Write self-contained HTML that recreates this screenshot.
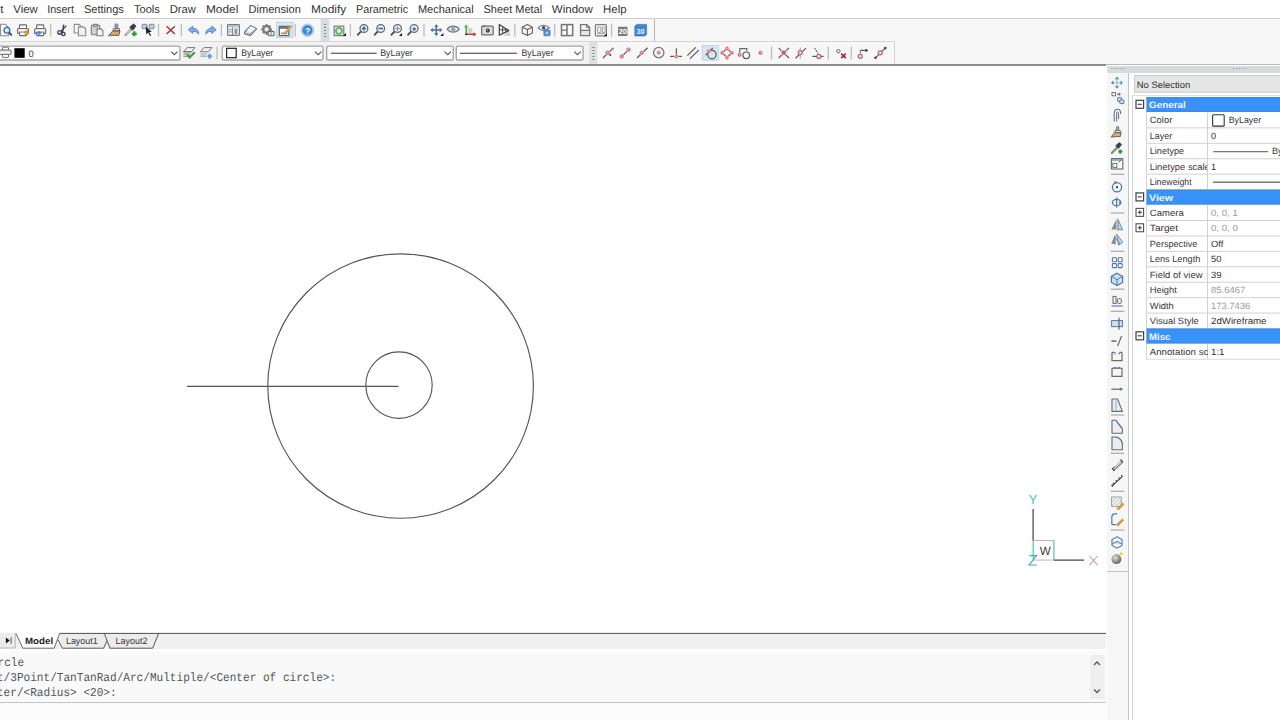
<!DOCTYPE html>
<html><head><meta charset="utf-8"><style>html,body{margin:0;padding:0;overflow:hidden;background:#fff}svg{display:block}</style></head><body><svg width="1280" height="720" viewBox="0 0 1280 720" text-rendering="geometricPrecision"><rect x="0" y="0" width="1280" height="720" fill="#ffffff" />
<rect x="0" y="0" width="1280" height="18" fill="#ffffff" />
<rect x="0" y="18" width="1280" height="1" fill="#cdcdcd" />
<rect x="0" y="19" width="1280" height="45" fill="#f7f7f7" />
<rect x="0" y="19" width="654" height="22" fill="#f7f7f7" />
<rect x="654" y="19" width="1" height="22" fill="#b4b4b4" />
<rect x="0" y="41" width="894" height="1" fill="#d5d5d5" />
<rect x="0" y="42" width="589" height="22" fill="#f2f2f2" />
<rect x="589" y="42" width="8" height="22" fill="#dde1e4" />
<rect x="597" y="42" width="297" height="22" fill="#f7f7f7" />
<rect x="894" y="41" width="1" height="23" fill="#d2d2d2" />
<rect x="0" y="64" width="1106" height="2" fill="#8e8e8e" />
<rect x="1106" y="64" width="174" height="1" fill="#b9b9b9" />
<text x="-16.1" y="13.2" font-family="Liberation Sans" font-size="11.3" font-weight="normal" fill="#333333" textLength="19.6" lengthAdjust="spacingAndGlyphs" >Edit</text>
<text x="13.25" y="13.2" font-family="Liberation Sans" font-size="11.3" font-weight="normal" fill="#333333" textLength="24.5" lengthAdjust="spacingAndGlyphs" >View</text>
<text x="47.2" y="13.2" font-family="Liberation Sans" font-size="11.3" font-weight="normal" fill="#333333" textLength="26.7" lengthAdjust="spacingAndGlyphs" >Insert</text>
<text x="83.9" y="13.2" font-family="Liberation Sans" font-size="11.3" font-weight="normal" fill="#333333" textLength="40.0" lengthAdjust="spacingAndGlyphs" >Settings</text>
<text x="133.9" y="13.2" font-family="Liberation Sans" font-size="11.3" font-weight="normal" fill="#333333" textLength="26.0" lengthAdjust="spacingAndGlyphs" >Tools</text>
<text x="169.8" y="13.2" font-family="Liberation Sans" font-size="11.3" font-weight="normal" fill="#333333" textLength="26.0" lengthAdjust="spacingAndGlyphs" >Draw</text>
<text x="206.0" y="13.2" font-family="Liberation Sans" font-size="11.3" font-weight="normal" fill="#333333" textLength="32.3" lengthAdjust="spacingAndGlyphs" >Model</text>
<text x="248.6" y="13.2" font-family="Liberation Sans" font-size="11.3" font-weight="normal" fill="#333333" textLength="52.2" lengthAdjust="spacingAndGlyphs" >Dimension</text>
<text x="311.1" y="13.2" font-family="Liberation Sans" font-size="11.3" font-weight="normal" fill="#333333" textLength="35.1" lengthAdjust="spacingAndGlyphs" >Modify</text>
<text x="356.1" y="13.2" font-family="Liberation Sans" font-size="11.3" font-weight="normal" fill="#333333" textLength="52.0" lengthAdjust="spacingAndGlyphs" >Parametric</text>
<text x="417.9" y="13.2" font-family="Liberation Sans" font-size="11.3" font-weight="normal" fill="#333333" textLength="55.8" lengthAdjust="spacingAndGlyphs" >Mechanical</text>
<text x="483.5" y="13.2" font-family="Liberation Sans" font-size="11.3" font-weight="normal" fill="#333333" textLength="58.6" lengthAdjust="spacingAndGlyphs" >Sheet Metal</text>
<text x="551.8" y="13.2" font-family="Liberation Sans" font-size="11.3" font-weight="normal" fill="#333333" textLength="41.0" lengthAdjust="spacingAndGlyphs" >Window</text>
<text x="603.1" y="13.2" font-family="Liberation Sans" font-size="11.3" font-weight="normal" fill="#333333" textLength="23.4" lengthAdjust="spacingAndGlyphs" >Help</text>
<rect x="0" y="66" width="1106" height="567" fill="#ffffff" />
<g fill="none" stroke="#555555" stroke-width="1.15"><ellipse cx="400.6" cy="386" rx="132.8" ry="132.2"/><circle cx="399" cy="385.1" r="33.2"/><line x1="187" y1="386.3" x2="398.5" y2="386.3"/></g>
<rect x="0" y="633" width="1106" height="1" fill="#6e6e6e" />
<rect x="0" y="634" width="1106" height="15" fill="#efefef" />
<rect x="0" y="649" width="1106" height="53" fill="#f9f9f9" />
<rect x="0" y="702" width="1106" height="1" fill="#c4c4c4" />
<rect x="0" y="703" width="1106" height="17" fill="#fafafa" />
<rect x="1106" y="65" width="174" height="655" fill="#ffffff" />
<rect x="1107" y="66" width="173" height="7" fill="#d6dbde" />
<rect x="1107" y="73" width="21" height="498" fill="#f6f6f6" />
<rect x="1107" y="571" width="21" height="149" fill="#f6f6f6" />
<rect x="1107" y="571" width="21" height="1" fill="#c0c0c0" />
<rect x="1128" y="73" width="1" height="647" fill="#c3c3c3" />
<rect x="1132" y="95" width="1" height="625" fill="#d3d3d3" />
<path d="M0.6 24.3 H5.3 L8.3 27.3 V35.8 H0.6Z" fill="#fff" stroke="#8c8c8c" stroke-width="1.1"/><line x1="8.8" y1="32.2" x2="11.2" y2="34.8" stroke="#2f3a46" stroke-width="1.8" stroke-linecap="round"/><circle cx="6.9" cy="30.3" r="2.9" fill="#d4ecfb" stroke="#3a6aa3" stroke-width="1.3"/>
<g stroke="#6a6a6a" stroke-width="1.1" fill="#fff"><rect x="19.5" y="24.9" width="7" height="4" rx="0.5"/><rect x="17.5" y="28.5" width="11" height="5.2" rx="1.2" fill="#e9e9e9"/><rect x="19.5" y="32" width="7" height="3.6" rx="0.5"/><line x1="19.5" y1="30.8" x2="26.5" y2="30.8" stroke="#fff" stroke-width="1"/></g><circle cx="26.6" cy="32.6" r="2.1" fill="#e59a2f" stroke="#c57a1a" stroke-width="0.5"/>
<g stroke="#6a6a6a" stroke-width="1.1" fill="#fff"><rect x="36.7" y="24.9" width="7" height="4" rx="0.5"/><rect x="34.7" y="28.5" width="11" height="5.2" rx="1.2" fill="#e9e9e9"/><rect x="36.7" y="32" width="7" height="3.6" rx="0.5"/><line x1="36.7" y1="30.8" x2="43.7" y2="30.8" stroke="#fff" stroke-width="1"/></g><path d="M34 32.3 H38.5 V30.6 L41.8 33 L38.5 35.4 V33.7 H34Z" fill="#3f86d6"/>
<line x1="50.7" y1="23.8" x2="50.7" y2="36.6" stroke="#bdbdbd" stroke-width="1.3"/>
<g stroke="#3c4651" stroke-width="1.4" fill="none"><circle cx="59.6" cy="32.4" r="1.8"/><circle cx="63.4" cy="34" r="1.6"/><line x1="61" y1="31.4" x2="66.3" y2="25.6"/><line x1="62.6" y1="32.4" x2="63.6" y2="24.6"/></g>
<g stroke="#8a8a8a" stroke-width="1.1" fill="#f7f7f7"><path d="M74.2 24.4 H79 L80.6 26 V33 H74.2Z"/><path d="M78.4 26.9 H83.6 L85.7 29 V35.7 H78.4Z" fill="#f0f0f0"/></g>
<g stroke="#7d7d7d" stroke-width="1.1"><rect x="91.3" y="25.3" width="8.4" height="9.4" rx="0.8" fill="#cdd2d8"/><rect x="93.4" y="24.4" width="4.2" height="2" rx="0.6" fill="#e8e8e8"/><path d="M97 28.9 H101 L102.9 30.8 V35.7 H97Z" fill="#f4f4f4"/></g>
<rect x="115" y="23.8" width="2.8" height="5.4" rx="1.2" fill="#9aa0a6" stroke="#6b6b6b" stroke-width="0.8"/><rect x="113.2" y="28.8" width="6.4" height="2" fill="#e6e6e6" stroke="#555" stroke-width="0.8"/><path d="M112.8 31 H120 L118.8 35.3 H108.8Z" fill="#d5ad6c" stroke="#5a4a30" stroke-width="0.9"/><line x1="107.8" y1="35.8" x2="112" y2="35.8" stroke="#5b8fd0" stroke-width="0.9"/>
<path d="M125.6 35 L131.2 29.4" stroke="#8a8a8a" stroke-width="2.4" stroke-linecap="round"/><path d="M125.8 34.8 L131 29.6" stroke="#fff" stroke-width="1" /><path d="M130 27.2 L133.6 24.2 L135.6 26.2 L132.8 29.8Z" fill="#3b3f45" stroke="#3b3f45" stroke-width="1.2" stroke-linejoin="round"/><path d="M134.3 31.3 V36.3 M131.8 33.8 H136.8" stroke="#2e9a3a" stroke-width="2.2"/>
<rect x="142.2" y="24.3" width="4.8" height="4.4" rx="0.6" fill="#bcd0e6" stroke="#6e7f92" stroke-width="0.9"/><rect x="149.2" y="24.3" width="4.8" height="4.4" rx="0.6" fill="#bcd0e6" stroke="#6e7f92" stroke-width="0.9"/><path d="M145.8 26.6 L146.2 34.6 L148 32.6 L150.2 35.9 L151.2 35.2 L149.2 32.2 L151.8 31.8Z" fill="#222" />
<line x1="158.5" y1="23.8" x2="158.5" y2="36.6" stroke="#bdbdbd" stroke-width="1.3"/>
<path d="M166.6 26.2 L174.9 34 M174.9 26.2 L166.6 34" stroke="#a8353a" stroke-width="1.55"/>
<line x1="181.4" y1="23.8" x2="181.4" y2="36.6" stroke="#bdbdbd" stroke-width="1.3"/>
<path d="M188.3 29.7 L192.8 26.2 V28.3 C196.3 28.3 198.8 30.6 198.6 34.2 C197.4 32.2 195.6 31.3 192.8 31.5 V33.4Z" fill="#7eb0ea" stroke="#4d7fc0" stroke-width="0.9" stroke-linejoin="round"/>
<path d="M216.2 29.7 L211.7 26.2 V28.3 C208.2 28.3 205.7 30.6 205.9 34.2 C207.1 32.2 208.9 31.3 211.7 31.5 V33.4Z" fill="#7eb0ea" stroke="#4d7fc0" stroke-width="0.9" stroke-linejoin="round"/>
<line x1="221.4" y1="23.8" x2="221.4" y2="36.6" stroke="#bdbdbd" stroke-width="1.3"/>
<rect x="227.6" y="24.6" width="11.8" height="10.8" rx="0.8" fill="#f1f1f1" stroke="#737a80" stroke-width="1.2"/><rect x="228.2" y="25.2" width="10.6" height="2" fill="#a9c3de"/><line x1="232.4" y1="27.4" x2="232.4" y2="35" stroke="#737a80" stroke-width="1"/><rect x="234.3" y="28.6" width="3" height="5.4" fill="#9a9a9a"/><rect x="228.9" y="29" width="2.4" height="1.2" fill="#9a9a9a"/><rect x="228.9" y="31.3" width="2.4" height="1.2" fill="#9a9a9a"/>
<path d="M244.5 32.2 L250.6 25.6 L256.6 28.8 L250.6 35.4 L244.5 33.6Z" fill="#d8d8d8" stroke="#6f6f6f" stroke-width="1.1" stroke-linejoin="round"/><path d="M246.8 30.6 L251 26.3 L255.2 28.6 L250.8 33Z" fill="#f6f9fd"/><path d="M249.6 34.3 L255.8 29.2" stroke="#8fb0d8" stroke-width="1.2"/>
<g fill="#8a8a8a" stroke="#5e5e5e" stroke-width="0.6"><circle cx="266.6" cy="29.4" r="4.1"/></g><g fill="#7a7a7a"><rect x="265.7" y="24" width="1.8" height="10.8"/><rect x="261.2" y="28.5" width="10.8" height="1.8"/><rect x="265.7" y="24" width="1.8" height="10.8" transform="rotate(45 266.6 29.4)"/><rect x="261.2" y="28.5" width="10.8" height="1.8" transform="rotate(45 266.6 29.4)"/></g><circle cx="266.6" cy="29.4" r="2.6" fill="#f0f0f0" stroke="#6a6a6a" stroke-width="0.8"/><rect x="268.2" y="31.4" width="5.8" height="4.4" rx="0.6" fill="#ececec" stroke="#6a6a6a" stroke-width="1.1"/><line x1="271.1" y1="31.6" x2="271.1" y2="35.6" stroke="#6a6a6a" stroke-width="0.8"/>
<rect x="276.5" y="22.3" width="16.4" height="15.2" fill="#d9e6f3" stroke="#bcd3ea" stroke-width="1"/><rect x="279.3" y="26.4" width="9.6" height="9.2" fill="#fafafa" stroke="#5f6770" stroke-width="1.3"/><rect x="279.6" y="26.6" width="9" height="2.2" fill="#6c747c"/><line x1="281" y1="33.2" x2="287" y2="33.2" stroke="#5f6770" stroke-width="1"/><path d="M284.6 32.6 L290.2 25.4 L291.8 26.6 L286.2 33.6 L284.2 34.2Z" fill="#e8b060" stroke="#b07838" stroke-width="0.7"/>
<line x1="295.2" y1="23.8" x2="295.2" y2="36.6" stroke="#bdbdbd" stroke-width="1.3"/>
<circle cx="307.5" cy="30.2" r="6.3" fill="#b2d4f3" stroke="#8fb8e0" stroke-width="0.6"/><circle cx="307.5" cy="30.2" r="5" fill="#3c86d6"/><text x="307.5" y="33.6" font-family="Liberation Sans" font-weight="bold" font-size="8.6" fill="#fff" text-anchor="middle">?</text>
<rect x="320.6" y="19" width="8.8" height="22" fill="#d7dcdf"/><rect x="324" y="24" width="2.2" height="1" fill="#7f858a"/><rect x="324" y="27" width="2.2" height="1" fill="#7f858a"/><rect x="324" y="30" width="2.2" height="1" fill="#7f858a"/><rect x="324" y="33" width="2.2" height="1" fill="#7f858a"/><rect x="324" y="36" width="2.2" height="1" fill="#7f858a"/>
<rect x="334.2" y="26.2" width="9.6" height="9.4" fill="#f7f7f7" stroke="#7a7a7a" stroke-width="1.2"/><circle cx="339" cy="30.9" r="2.9" fill="none" stroke="#5cba5c" stroke-width="2"/><path d="M336.8 29.6 L338.4 31 M341.2 32.2 L339.6 30.8" stroke="#fff" stroke-width="0.8"/><path d="M346 36 L346 33 L343 36Z" fill="#111"/>
<line x1="350.4" y1="23.8" x2="350.4" y2="36.6" stroke="#bdbdbd" stroke-width="1.3"/>
<line x1="361.59999999999997" y1="30.9" x2="357.9" y2="34.7" stroke="#4d4d4d" stroke-width="1.9" stroke-linecap="round"/><circle cx="363.9" cy="28.5" r="3.9" fill="#e3eef9" stroke="#6a6a6a" stroke-width="1.3"/><path d="M361.8 28.5 H366 M363.9 26.4 V30.6" stroke="#3868a8" stroke-width="1.6"/>
<line x1="378.4" y1="30.9" x2="374.7" y2="34.7" stroke="#4d4d4d" stroke-width="1.9" stroke-linecap="round"/><circle cx="380.7" cy="28.5" r="3.9" fill="#e3eef9" stroke="#6a6a6a" stroke-width="1.3"/><path d="M378.4 28.5 H383" stroke="#3868a8" stroke-width="1.6"/>
<line x1="395.2" y1="30.9" x2="391.5" y2="34.7" stroke="#4d4d4d" stroke-width="1.9" stroke-linecap="round"/><circle cx="397.5" cy="28.5" r="3.9" fill="#e3eef9" stroke="#6a6a6a" stroke-width="1.3"/><path d="M395.2 28.5 H399.8 M397.5 26.2 V30.8" stroke="#6a8cb0" stroke-width="0.9"/><path d="M402 36 L402 33 L399 36Z" fill="#111"/>
<line x1="411.8" y1="30.9" x2="408.1" y2="34.7" stroke="#4d4d4d" stroke-width="1.9" stroke-linecap="round"/><circle cx="414.1" cy="28.5" r="3.9" fill="#e3eef9" stroke="#6a6a6a" stroke-width="1.3"/><path d="M412.2 29 L414.5 26.6 V28.2 H416 V29.8 H414.5 V31.4Z" fill="#3c6cb0"/>
<line x1="424" y1="23.8" x2="424" y2="36.6" stroke="#bdbdbd" stroke-width="1.3"/>
<g stroke="#4a6f98" stroke-width="1.5" fill="#4a6f98"><line x1="431.5" y1="30" x2="441.2" y2="30"/><line x1="436.3" y1="25.3" x2="436.3" y2="34.8"/></g><g fill="#4a6f98"><path d="M436.3 24.2 L438.5 26.8 H434.1Z"/><path d="M436.3 35.9 L438.5 33.2 H434.1Z"/><path d="M430.3 30 L432.9 27.8 V32.2Z"/><path d="M442.3 30 L439.7 27.8 V32.2Z"/></g><path d="M443.4 36 L443.4 33 L440.4 36Z" fill="#111"/>
<path d="M447.2 29.2 C450 25.2 456.2 25.2 459.2 29.2 C456.2 33.2 450 33.2 447.2 29.2Z" fill="#eef2f6" stroke="#6b7b8a" stroke-width="1.3"/><circle cx="453.2" cy="29.2" r="2.2" fill="#7d9ab8"/><path d="M452.3 30.2 L454.6 28" stroke="#dfe9f3" stroke-width="0.8"/>
<rect x="467.8" y="28.2" width="4.6" height="5" fill="#cfcfcf"/><line x1="466.2" y1="34.3" x2="466.2" y2="26.5" stroke="#47b447" stroke-width="1.6"/><path d="M466.2 24.4 L468.4 27.4 H464Z" fill="#47b447"/><line x1="466.2" y1="34.3" x2="474" y2="34.3" stroke="#b83838" stroke-width="1.4"/><path d="M476.4 34.3 L473.4 32.2 V36.4Z" fill="#b83838"/><circle cx="466.2" cy="34.3" r="1" fill="#222"/>
<rect x="481.6" y="26.2" width="11.6" height="8.6" rx="0.9" fill="#d9d9d9" stroke="#6f6f6f" stroke-width="1.2"/><rect x="482.6" y="25.4" width="3" height="1.4" fill="#6f6f6f"/><circle cx="487.8" cy="30.5" r="3" fill="#f4f4f4"/><circle cx="487.8" cy="30.5" r="2.2" fill="#3b4654"/><circle cx="487.4" cy="30.1" r="0.7" fill="#b8c6d6"/>
<path d="M510.5 35.5 H503.5 L509 31.5Z" fill="#c9c9c9"/><path d="M499.3 24.4 L508.8 30.6 L499.3 35.2Z" fill="#f4f4f4" stroke="#3f3f3f" stroke-width="1.2" stroke-linejoin="round"/><path d="M502.6 26.6 V33.6 M505.8 28.6 V32.2 M499.3 29.8 H508.4" stroke="#3f3f3f" stroke-width="0.9"/>
<line x1="514.8" y1="23.8" x2="514.8" y2="36.6" stroke="#bdbdbd" stroke-width="1.3"/>
<g fill="#f7f7f7" stroke="#606060" stroke-width="1.1" stroke-linejoin="round"><path d="M522.2 27.2 L527.4 24.6 L532.4 27.2 V33 L527.4 35.6 L522.2 33Z"/><path d="M522.2 27.2 L527.4 29.6 L532.4 27.2 M527.4 29.6 V35.6" fill="none"/></g>
<path d="M538.2 27.8 C540.6 24.4 545.6 24.4 549.2 27.8 C545.6 31.2 540.6 31.2 538.2 27.8Z" fill="#eef2f6" stroke="#6b7b8a" stroke-width="1.2"/><circle cx="543.6" cy="27.8" r="1.7" fill="#3d4c5c"/><rect x="543.9" y="30" width="6.2" height="5.8" rx="0.7" fill="#5b95d6" stroke="#3a70b0" stroke-width="0.7"/><rect x="546.2" y="31.8" width="1.6" height="2.2" fill="#cfe2f6"/>
<line x1="554.7" y1="23.8" x2="554.7" y2="36.6" stroke="#bdbdbd" stroke-width="1.3"/>
<rect x="561.5" y="24.6" width="11.2" height="11" fill="#f8f8f8" stroke="#767676" stroke-width="1.5"/><line x1="567" y1="24.6" x2="567" y2="35.6" stroke="#767676" stroke-width="1.5"/><line x1="561.5" y1="30.1" x2="567" y2="30.1" stroke="#767676" stroke-width="1.3"/>
<path d="M580.6 24.6 H586.6 L589.6 27.6 V35.6 H580.6Z" fill="#f8f8f8" stroke="#767676" stroke-width="1.4" stroke-linejoin="round"/><path d="M586.6 24.6 V27.6 H589.6" fill="none" stroke="#767676" stroke-width="1"/><line x1="580.6" y1="30.4" x2="589.6" y2="30.4" stroke="#767676" stroke-width="1.2"/><rect x="582" y="31.2" width="6.4" height="3.6" fill="#e4e4e4"/>
<rect x="595.4" y="24.6" width="11" height="11.2" rx="0.8" fill="#f8f8f8" stroke="#7c7c7c" stroke-width="1.2"/><path d="M597.6 27 V32.4 H600.8 V27 Z M602.4 27 V32.4 H605 V27Z" fill="none" stroke="#9a9a9a" stroke-width="0.9"/><line x1="597" y1="33.6" x2="605" y2="33.6" stroke="#9a9a9a" stroke-width="0.9"/><path d="M606.8 36.2 L606.8 33.2 L603.8 36.2Z" fill="#111"/>
<line x1="611.6" y1="23.8" x2="611.6" y2="36.6" stroke="#bdbdbd" stroke-width="1.3"/>
<rect x="618" y="26.8" width="9.4" height="9.2" fill="#7b7b7b"/><text x="622.7" y="34.2" font-family="Liberation Sans" font-size="7.4" font-weight="bold" fill="#fff" text-anchor="middle" textLength="8" lengthAdjust="spacingAndGlyphs">20</text>
<path d="M636.6 24.4 H646.6 V34.2 L645 36 H634.8 V26.2Z" fill="#3a86d4" stroke="#2d6fb4" stroke-width="0.6"/><text x="640.4" y="34.2" font-family="Liberation Sans" font-size="7.4" font-weight="bold" fill="#e8f3ff" text-anchor="middle" textLength="8" lengthAdjust="spacingAndGlyphs">30</text>
<rect x="-4.35" y="46.15" width="184.29999999999998" height="13.9" rx="1.5" fill="#fff" stroke="#a6a6a6" stroke-width="1.4"/>
<g stroke="#6f6f6f" stroke-width="1" fill="#fff"><rect x="2.5" y="47.2" width="6" height="3.2" rx="0.4"/><rect x="-1" y="50" width="12.2" height="4.6" rx="1.2" fill="#dfe3e6"/><rect x="2.5" y="54.4" width="6" height="3" rx="0.4"/></g><line x1="1" y1="52.6" x2="9.5" y2="52.6" stroke="#fff" stroke-width="1"/>
<rect x="14.4" y="48.2" width="10.3" height="9.6" fill="#000"/>
<text x="28.4" y="56.8" font-family="Liberation Sans" font-size="9.4" fill="#4d3f5e">0</text>
<path d="M171.10000000000002 51.7 L174.3 54.7 L177.5 51.7" fill="none" stroke="#555" stroke-width="1.1"/>
<g stroke="#6a6a6a" stroke-width="0.9" fill="#f2f2f2"><path d="M183.5 51.8 L187.2 47.6 H195 L191.4 51.8Z"/><path d="M183.5 51.8 H191.4 M183.5 54 H190 M183.5 56.2 H188.6" fill="none"/></g><path d="M187.2 54.6 L189.6 57.4 L194.8 52.2" fill="none" stroke="#36a046" stroke-width="2.3"/>
<g stroke="#6a6a6a" stroke-width="0.9" fill="#f2f2f2"><path d="M200.4 51.8 L204.1 47.6 H211.9 L208.3 51.8Z"/></g><path d="M200.4 54 H207 M200.4 56.2 H206" stroke="#8aa6c8" stroke-width="1.2"/><path d="M209.6 53.8 L212 56.3 L209.6 58.8 L207.2 56.3Z" fill="#6ca2dc" stroke="#4d86c8" stroke-width="0.6"/>
<line x1="217" y1="46.4" x2="217" y2="59.6" stroke="#bdbdbd" stroke-width="1.3"/>
<rect x="222.25" y="46.15" width="100.70000000000003" height="13.9" rx="1.5" fill="#fff" stroke="#a6a6a6" stroke-width="1.4"/>
<rect x="226.6" y="48.3" width="9.6" height="9.4" fill="#fff" stroke="#222" stroke-width="1.2"/>
<text x="241.2" y="56.3" font-family="Liberation Sans" font-size="9.4" fill="#3a3440" textLength="32" lengthAdjust="spacingAndGlyphs">ByLayer</text>
<path d="M315.0 51.7 L318.2 54.7 L321.4 51.7" fill="none" stroke="#555" stroke-width="1.1"/>
<rect x="326.65" y="46.15" width="126.59999999999998" height="13.9" rx="1.5" fill="#fff" stroke="#a6a6a6" stroke-width="1.4"/>
<line x1="331" y1="53.3" x2="376.7" y2="53.3" stroke="#333" stroke-width="1.1" />
<text x="380.2" y="56.3" font-family="Liberation Sans" font-size="9.4" fill="#343a34" textLength="32.6" lengthAdjust="spacingAndGlyphs">ByLayer</text>
<path d="M444.6 51.7 L447.8 54.7 L451.0 51.7" fill="none" stroke="#555" stroke-width="1.1"/>
<rect x="456.25" y="46.15" width="126.80000000000003" height="13.9" rx="1.5" fill="#fff" stroke="#a6a6a6" stroke-width="1.4"/>
<line x1="460" y1="53.3" x2="517" y2="53.3" stroke="#333" stroke-width="1.1" />
<text x="521.4" y="56.3" font-family="Liberation Sans" font-size="9.4" fill="#3a3440" textLength="32.2" lengthAdjust="spacingAndGlyphs">ByLayer</text>
<path d="M574.3 51.7 L577.5 54.7 L580.7 51.7" fill="none" stroke="#555" stroke-width="1.1"/>
<rect x="589.4" y="42" width="8" height="22" fill="#dde1e4"/><rect x="592.4" y="47" width="2.2" height="1" fill="#7f858a"/><rect x="592.4" y="50" width="2.2" height="1" fill="#7f858a"/><rect x="592.4" y="53" width="2.2" height="1" fill="#7f858a"/><rect x="592.4" y="56" width="2.2" height="1" fill="#7f858a"/><rect x="592.4" y="59" width="2.2" height="1" fill="#7f858a"/>
<line x1="602.9" y1="58" x2="613.6" y2="47.9" stroke="#5a5a5a" stroke-width="1.2" /><circle cx="607.8" cy="52.8" r="2.3" fill="#c6626a" stroke="#f0c4c8" stroke-width="0.7"/><circle cx="607.8" cy="52.599999999999994" r="0.87" fill="#f5d0d3"/><circle cx="610.3" cy="55" r="0.9" fill="#333"/>
<line x1="621.8" y1="56.4" x2="628.6" y2="49.6" stroke="#5a5a5a" stroke-width="1.2" /><circle cx="621.8" cy="56.4" r="2.1" fill="#c6626a" stroke="#f0c4c8" stroke-width="0.7"/><circle cx="621.8" cy="56.199999999999996" r="0.80" fill="#f5d0d3"/><circle cx="628.6" cy="49.6" r="2.1" fill="#c6626a" stroke="#f0c4c8" stroke-width="0.7"/><circle cx="628.6" cy="49.4" r="0.80" fill="#f5d0d3"/>
<line x1="637" y1="58" x2="647.6" y2="47.8" stroke="#5a5a5a" stroke-width="1.2" /><circle cx="641.7" cy="52.8" r="2.1" fill="#c6626a" stroke="#f0c4c8" stroke-width="0.7"/><circle cx="641.7" cy="52.599999999999994" r="0.80" fill="#f5d0d3"/>
<circle cx="658.7" cy="52.6" r="5.2" fill="none" stroke="#7a7a7a" stroke-width="1.3"/><circle cx="658.7" cy="52.6" r="1.9" fill="#c6626a" stroke="#f0c4c8" stroke-width="0.7"/><circle cx="658.7" cy="52.4" r="0.72" fill="#f5d0d3"/>
<line x1="676.4" y1="48.2" x2="676.4" y2="56.4" stroke="#5a5a5a" stroke-width="1.2" /><line x1="670.1" y1="56.4" x2="681.9" y2="56.4" stroke="#5a5a5a" stroke-width="1.2" /><path d="M676.4 54 L678.8 56.4 L676.4 58.8 L674 56.4Z" fill="#c6626a" stroke="#f0c4c8" stroke-width="0.6"/><circle cx="676.4" cy="56.4" r="0.8" fill="#f5d0d3"/>
<line x1="687.3" y1="55.6" x2="695.8" y2="47.4" stroke="#5a5a5a" stroke-width="1.3" /><line x1="690" y1="58.6" x2="698.8" y2="50.1" stroke="#5a5a5a" stroke-width="1.3" />
<rect x="702.3" y="45.7" width="16" height="14.4" fill="#d5e6f5" stroke="#b6d2ee" stroke-width="1"/><circle cx="711.9" cy="54.6" r="4.2" fill="none" stroke="#555" stroke-width="1.2"/><line x1="705.6" y1="55.2" x2="712.8" y2="48" stroke="#5a5a5a" stroke-width="1.2" /><circle cx="708.9" cy="51.2" r="2" fill="#c6626a" stroke="#f0c4c8" stroke-width="0.7"/><circle cx="708.9" cy="51.0" r="0.76" fill="#f5d0d3"/>
<path d="M727 48.4 L731.8 52.8 L727 57.6 L722.2 52.8Z" fill="none" stroke="#a8575e" stroke-width="1.4"/><circle cx="727" cy="48.4" r="1.9" fill="#c6626a" stroke="#f0c4c8" stroke-width="0.7"/><circle cx="727" cy="48.199999999999996" r="0.72" fill="#f5d0d3"/><circle cx="727" cy="57.6" r="1.9" fill="#c6626a" stroke="#f0c4c8" stroke-width="0.7"/><circle cx="727" cy="57.4" r="0.72" fill="#f5d0d3"/><circle cx="722.2" cy="52.8" r="1.9" fill="#c6626a" stroke="#f0c4c8" stroke-width="0.7"/><circle cx="722.2" cy="52.599999999999994" r="0.72" fill="#f5d0d3"/><circle cx="731.8" cy="52.8" r="1.9" fill="#c6626a" stroke="#f0c4c8" stroke-width="0.7"/><circle cx="731.8" cy="52.599999999999994" r="0.72" fill="#f5d0d3"/>
<path d="M739.7 53.9 V48.6 H746.8 V51" fill="none" stroke="#6a6a6a" stroke-width="1.2"/><circle cx="746.3" cy="55.3" r="3.3" fill="none" stroke="#5a5a5a" stroke-width="1.2"/><circle cx="739.7" cy="54.8" r="2.1" fill="#c6626a" stroke="#f0c4c8" stroke-width="0.7"/><circle cx="739.7" cy="54.599999999999994" r="0.80" fill="#f5d0d3"/>
<circle cx="760.5" cy="52.8" r="2.1" fill="#c6626a" stroke="#f0c4c8" stroke-width="0.7"/><circle cx="760.5" cy="52.599999999999994" r="0.80" fill="#f5d0d3"/>
<line x1="771.5" y1="46.4" x2="771.5" y2="59.6" stroke="#bdbdbd" stroke-width="1.3"/>
<line x1="778.6" y1="47.9" x2="789" y2="58" stroke="#5a5a5a" stroke-width="1.2" /><line x1="789" y1="47.9" x2="778.6" y2="58" stroke="#5a5a5a" stroke-width="1.2" /><rect x="781.6" y="50.6" width="4.4" height="4.4" fill="#c6626a" stroke="#f0c4c8" stroke-width="0.6"/>
<line x1="800.2" y1="47.5" x2="800.2" y2="58.5" stroke="#9a9a9a" stroke-width="1" /><line x1="795.5" y1="58.2" x2="806" y2="48.1" stroke="#5a5a5a" stroke-width="1.2" /><circle cx="800.2" cy="52.6" r="2" fill="#f6e6e8" stroke="#c6626a" stroke-width="1.3"/>
<line x1="814.6" y1="48.1" x2="818" y2="53.4" stroke="#5a5a5a" stroke-width="1.1" stroke-dasharray="1.6 1"/><line x1="812.3" y1="56.4" x2="823.6" y2="56.4" stroke="#5a5a5a" stroke-width="1.2" /><circle cx="818.9" cy="56.4" r="2" fill="#f6e6e8" stroke="#c6626a" stroke-width="1.3"/>
<line x1="828.3" y1="46.4" x2="828.3" y2="59.6" stroke="#bdbdbd" stroke-width="1.3"/>
<circle cx="838.4" cy="51.2" r="1.7" fill="none" stroke="#555" stroke-width="0.9"/><path d="M841.2 53.6 L845.8 58.2 M845.8 53.6 L841.2 58.2" stroke="#b0262e" stroke-width="1.7"/>
<line x1="851.3" y1="46.4" x2="851.3" y2="59.6" stroke="#bdbdbd" stroke-width="1.3"/>
<line x1="860.3" y1="53.8" x2="860.3" y2="50.4" stroke="#777" stroke-width="1" /><line x1="860.3" y1="50.4" x2="866.2" y2="50.4" stroke="#555" stroke-width="1.2" /><circle cx="866.4" cy="50.4" r="1.3" fill="#444"/><circle cx="860.3" cy="56.3" r="2" fill="#f6e6e8" stroke="#c6626a" stroke-width="1.3"/>
<line x1="875.5" y1="57.8" x2="885.3" y2="48.1" stroke="#555" stroke-width="1.1" /><circle cx="875.5" cy="57.8" r="1.3" fill="#444"/><circle cx="885.3" cy="48.1" r="1.3" fill="#444"/><circle cx="880.2" cy="52.8" r="2" fill="#f6e6e8" stroke="#c6626a" stroke-width="1.3"/>
<rect x="1107" y="66" width="173" height="7" fill="#d6dbde"/>
<rect x="1111.3" y="68" width="1.2" height="1" fill="#8e959b"/><rect x="1114.4" y="68" width="1.2" height="1" fill="#8e959b"/><rect x="1117.5" y="68" width="1.2" height="1" fill="#8e959b"/><rect x="1120.6" y="68" width="1.2" height="1" fill="#8e959b"/><rect x="1123.7" y="68" width="1.2" height="1" fill="#8e959b"/>
<rect x="1232.8" y="68" width="1.2" height="1" fill="#8e959b"/><rect x="1235.9" y="68" width="1.2" height="1" fill="#8e959b"/><rect x="1239.0" y="68" width="1.2" height="1" fill="#8e959b"/><rect x="1242.1" y="68" width="1.2" height="1" fill="#8e959b"/><rect x="1245.2" y="68" width="1.2" height="1" fill="#8e959b"/>
<rect x="1107" y="73" width="21" height="647" fill="#f6f6f6"/>
<rect x="1128" y="73" width="1" height="647" fill="#c4c4c4"/>
<rect x="1107" y="571" width="21" height="1" fill="#c2c2c2"/>
<rect x="1134.5" y="75.5" width="150" height="16.8" fill="#e5e5e5" stroke="#cdcdcd" stroke-width="1"/>
<text x="1136.8" y="88.1" font-family="Liberation Sans" font-size="9.3" font-weight="normal" fill="#2e2e2e" textLength="53.40" lengthAdjust="spacingAndGlyphs" >No Selection</text>
<rect x="1132" y="95" width="1" height="625" fill="#d5d5d5"/>
<rect x="1133" y="95" width="147" height="1" fill="#e0e0e0"/>
<rect x="1146" y="97" width="1" height="263" fill="#d4d4d4"/>
<rect x="1146.5" y="97.10" width="134" height="14.84" fill="#3992f8"/><rect x="1146.5" y="97.10" width="134" height="1" fill="#3f84d8" opacity="0.7"/><rect x="1146.5" y="110.94" width="134" height="1" fill="#3f84d8" opacity="0.7"/>
<rect x="1136" y="100.30" width="7.6" height="8"  fill="#fff" stroke="#404040" stroke-width="1.2"/><line x1="1137.6" y1="104.30" x2="1141.8" y2="104.30" stroke="#333" stroke-width="1"/>
<text x="1149" y="108.0" font-family="Liberation Sans" font-size="9.3" font-weight="bold" fill="#eef6ff" textLength="36.80" lengthAdjust="spacingAndGlyphs" >General</text>
<rect x="1146.5" y="127.37" width="134" height="1" fill="#d2d2d2"/>
<rect x="1207" y="112.53" width="1" height="15.44" fill="#d0d0d0"/>
<text x="1149.8" y="123.435" font-family="Liberation Sans" font-size="9.1" font-weight="normal" fill="#3a3340" textLength="22.50" lengthAdjust="spacingAndGlyphs" >Color</text>
<rect x="1212.6" y="114.73" width="11.6" height="11.4" rx="1" fill="#fff" stroke="#333" stroke-width="1.1"/>
<text x="1228.7" y="123.435" font-family="Liberation Sans" font-size="9.1" font-weight="normal" fill="#333" textLength="32.50" lengthAdjust="spacingAndGlyphs" >ByLayer</text>
<rect x="1146.5" y="142.81" width="134" height="1" fill="#d2d2d2"/>
<rect x="1207" y="127.97" width="1" height="15.44" fill="#d0d0d0"/>
<text x="1149.8" y="138.87" font-family="Liberation Sans" font-size="9.1" font-weight="normal" fill="#3a3340" textLength="22.30" lengthAdjust="spacingAndGlyphs" >Layer</text>
<text x="1211" y="138.87" font-family="Liberation Sans" font-size="9.1" font-weight="normal" fill="#2f2f2f" >0</text>
<rect x="1146.5" y="158.24" width="134" height="1" fill="#d2d2d2"/>
<rect x="1207" y="143.41" width="1" height="15.44" fill="#d0d0d0"/>
<text x="1149.8" y="154.305" font-family="Liberation Sans" font-size="9.1" font-weight="normal" fill="#3a3340" textLength="34.30" lengthAdjust="spacingAndGlyphs" >Linetype</text>
<rect x="1213.2" y="151.21" width="55" height="1" fill="#555"/>
<text x="1272" y="154.305" font-family="Liberation Sans" font-size="9.1" font-weight="normal" fill="#333" >ByLayer</text>
<rect x="1146.5" y="173.68" width="134" height="1" fill="#d2d2d2"/>
<rect x="1207" y="158.84" width="1" height="15.44" fill="#d0d0d0"/>
<svg x="1146" y="158.84" width="61" height="16" overflow="hidden"><text x="3.8" y="10.9" font-family="Liberation Sans" font-size="9.1" font-weight="normal" fill="#3a3340" textLength="60.00" lengthAdjust="spacingAndGlyphs" >Linetype scale</text></svg>
<text x="1211" y="169.74" font-family="Liberation Sans" font-size="9.1" font-weight="normal" fill="#2f2f2f" >1</text>
<rect x="1146.5" y="189.11" width="134" height="1" fill="#d2d2d2"/>
<rect x="1207" y="174.27" width="1" height="15.44" fill="#d0d0d0"/>
<text x="1149.8" y="185.17499999999998" font-family="Liberation Sans" font-size="9.1" font-weight="normal" fill="#3a3340" textLength="41.80" lengthAdjust="spacingAndGlyphs" >Lineweight</text>
<rect x="1213" y="181.57" width="67" height="1.2" fill="#555"/>
<rect x="1146.5" y="189.71" width="134" height="14.84" fill="#3992f8"/><rect x="1146.5" y="189.71" width="134" height="1" fill="#3f84d8" opacity="0.7"/><rect x="1146.5" y="203.54" width="134" height="1" fill="#3f84d8" opacity="0.7"/>
<rect x="1136" y="192.91" width="7.6" height="8"  fill="#fff" stroke="#404040" stroke-width="1.2"/><line x1="1137.6" y1="196.91" x2="1141.8" y2="196.91" stroke="#333" stroke-width="1"/>
<text x="1149" y="200.60999999999999" font-family="Liberation Sans" font-size="9.3" font-weight="bold" fill="#eef6ff" textLength="24.00" lengthAdjust="spacingAndGlyphs" >View</text>
<rect x="1146.5" y="219.98" width="134" height="1" fill="#d2d2d2"/>
<rect x="1207" y="205.14" width="1" height="15.44" fill="#d0d0d0"/>
<rect x="1136" y="208.34" width="7.6" height="8" fill="#fff" stroke="#444" stroke-width="1"/><path d="M1137.8 212.34 H1141.8 M1139.8 210.34 V214.34" stroke="#333" stroke-width="1"/>
<text x="1149.8" y="216.045" font-family="Liberation Sans" font-size="9.1" font-weight="normal" fill="#3a3340" textLength="34.00" lengthAdjust="spacingAndGlyphs" >Camera</text>
<text x="1211" y="216.045" font-family="Liberation Sans" font-size="9.1" font-weight="normal" fill="#999999" textLength="26.80" lengthAdjust="spacingAndGlyphs" >0, 0, 1</text>
<rect x="1146.5" y="235.41" width="134" height="1" fill="#d2d2d2"/>
<rect x="1207" y="220.58" width="1" height="15.44" fill="#d0d0d0"/>
<rect x="1136" y="223.78" width="7.6" height="8" fill="#fff" stroke="#444" stroke-width="1"/><path d="M1137.8 227.78 H1141.8 M1139.8 225.78 V229.78" stroke="#333" stroke-width="1"/>
<text x="1149.8" y="231.48" font-family="Liberation Sans" font-size="9.1" font-weight="normal" fill="#3a3340" textLength="28.30" lengthAdjust="spacingAndGlyphs" >Target</text>
<text x="1211" y="231.48" font-family="Liberation Sans" font-size="9.1" font-weight="normal" fill="#999999" textLength="26.80" lengthAdjust="spacingAndGlyphs" >0, 0, 0</text>
<rect x="1146.5" y="250.85" width="134" height="1" fill="#d2d2d2"/>
<rect x="1207" y="236.01" width="1" height="15.44" fill="#d0d0d0"/>
<text x="1149.8" y="246.915" font-family="Liberation Sans" font-size="9.1" font-weight="normal" fill="#3a3340" textLength="47.50" lengthAdjust="spacingAndGlyphs" >Perspective</text>
<text x="1211" y="246.915" font-family="Liberation Sans" font-size="9.1" font-weight="normal" fill="#2f2f2f" textLength="12.30" lengthAdjust="spacingAndGlyphs" >Off</text>
<rect x="1146.5" y="266.28" width="134" height="1" fill="#d2d2d2"/>
<rect x="1207" y="251.45" width="1" height="15.44" fill="#d0d0d0"/>
<text x="1149.8" y="262.34999999999997" font-family="Liberation Sans" font-size="9.1" font-weight="normal" fill="#3a3340" textLength="50.50" lengthAdjust="spacingAndGlyphs" >Lens Length</text>
<text x="1211" y="262.34999999999997" font-family="Liberation Sans" font-size="9.1" font-weight="normal" fill="#2f2f2f" textLength="10.50" lengthAdjust="spacingAndGlyphs" >50</text>
<rect x="1146.5" y="281.72" width="134" height="1" fill="#d2d2d2"/>
<rect x="1207" y="266.88" width="1" height="15.44" fill="#d0d0d0"/>
<text x="1149.8" y="277.78499999999997" font-family="Liberation Sans" font-size="9.1" font-weight="normal" fill="#3a3340" textLength="52.80" lengthAdjust="spacingAndGlyphs" >Field of view</text>
<text x="1211" y="277.78499999999997" font-family="Liberation Sans" font-size="9.1" font-weight="normal" fill="#2f2f2f" textLength="10.50" lengthAdjust="spacingAndGlyphs" >39</text>
<rect x="1146.5" y="297.15" width="134" height="1" fill="#d2d2d2"/>
<rect x="1207" y="282.32" width="1" height="15.44" fill="#d0d0d0"/>
<text x="1149.8" y="293.21999999999997" font-family="Liberation Sans" font-size="9.1" font-weight="normal" fill="#3a3340" textLength="27.00" lengthAdjust="spacingAndGlyphs" >Height</text>
<text x="1211" y="293.21999999999997" font-family="Liberation Sans" font-size="9.1" font-weight="normal" fill="#999999" textLength="34.30" lengthAdjust="spacingAndGlyphs" >85.6467</text>
<rect x="1146.5" y="312.59" width="134" height="1" fill="#d2d2d2"/>
<rect x="1207" y="297.75" width="1" height="15.44" fill="#d0d0d0"/>
<text x="1149.8" y="308.655" font-family="Liberation Sans" font-size="9.1" font-weight="normal" fill="#3a3340" textLength="24.00" lengthAdjust="spacingAndGlyphs" >Width</text>
<text x="1211" y="308.655" font-family="Liberation Sans" font-size="9.1" font-weight="normal" fill="#999999" textLength="39.30" lengthAdjust="spacingAndGlyphs" >173.7436</text>
<rect x="1146.5" y="328.02" width="134" height="1" fill="#d2d2d2"/>
<rect x="1207" y="313.19" width="1" height="15.44" fill="#d0d0d0"/>
<text x="1149.8" y="324.09" font-family="Liberation Sans" font-size="9.1" font-weight="normal" fill="#3a3340" textLength="49.00" lengthAdjust="spacingAndGlyphs" >Visual Style</text>
<text x="1211" y="324.09" font-family="Liberation Sans" font-size="9.1" font-weight="normal" fill="#2f2f2f" textLength="55.50" lengthAdjust="spacingAndGlyphs" >2dWireframe</text>
<rect x="1146.5" y="328.62" width="134" height="14.84" fill="#3992f8"/><rect x="1146.5" y="328.62" width="134" height="1" fill="#3f84d8" opacity="0.7"/><rect x="1146.5" y="342.46" width="134" height="1" fill="#3f84d8" opacity="0.7"/>
<rect x="1136" y="331.82" width="7.6" height="8"  fill="#fff" stroke="#404040" stroke-width="1.2"/><line x1="1137.6" y1="335.82" x2="1141.8" y2="335.82" stroke="#333" stroke-width="1"/>
<text x="1149" y="339.525" font-family="Liberation Sans" font-size="9.3" font-weight="bold" fill="#eef6ff" textLength="21.50" lengthAdjust="spacingAndGlyphs" >Misc</text>
<rect x="1146.5" y="358.89" width="134" height="1" fill="#d2d2d2"/>
<rect x="1207" y="344.06" width="1" height="15.44" fill="#d0d0d0"/>
<text x="1149.8" y="354.96" font-family="Liberation Sans" font-size="9.1" font-weight="normal" fill="#3a3340" textLength="58.50" lengthAdjust="spacingAndGlyphs" >Annotation sc</text>
<text x="1211" y="354.96" font-family="Liberation Sans" font-size="9.1" font-weight="normal" fill="#2f2f2f" textLength="13.50" lengthAdjust="spacingAndGlyphs" >1:1</text>
<rect x="1146.5" y="358.89" width="134" height="1" fill="#e3e3e3"/>
<g fill="#4d7aa8"><path d="M1117 76.8 L1119.2 79.2 H1114.8Z"/><path d="M1117 88.6 L1119.2 86.2 H1114.8Z"/><path d="M1111.1 82.7 L1113.5 80.5 V84.9Z"/><path d="M1122.9 82.7 L1120.5 80.5 V84.9Z"/></g><path d="M1113 82.7 H1121 M1117 78.8 V86.6" stroke="#9cb9d6" stroke-width="1.1"/><rect x="1112" y="92.6" width="3.6" height="3.2" fill="#fff" stroke="#6a6a6a" stroke-width="0.9"/><path d="M1117 94.2 H1120.2 L1119 92.8 M1120.2 94.2 L1119 95.6" fill="none" stroke="#444" stroke-width="0.9"/><rect x="1117.6" y="97.6" width="4" height="3.8" rx="0.6" fill="#cfe0f2" stroke="#4d7aa8" stroke-width="1"/><rect x="1119.8" y="99.8" width="4" height="3.8" rx="0.6" fill="#cfe0f2" stroke="#4d7aa8" stroke-width="1"/><path d="M1114.2 121.4 V113.4 C1114.2 110.6 1115.8 109.2 1117.4 109.2 C1119.2 109.2 1120.6 110.8 1120.6 113 V114" fill="none" stroke="#4d7aa8" stroke-width="1.1"/><path d="M1116.6 121.4 V114 C1116.6 112.6 1117 111.8 1117.6 111.8 C1118.2 111.8 1118.6 112.6 1118.6 113.6 V119" fill="none" stroke="#6a6a6a" stroke-width="1"/><g transform="translate(0,2.2)"><rect x="1116.4" y="124.2" width="2.4" height="4.4" rx="1" fill="#9aa0a6" stroke="#666" stroke-width="0.7"/><rect x="1115" y="128.4" width="5.2" height="1.8" fill="#e6e6e6" stroke="#555" stroke-width="0.7"/><path d="M1114.6 130.4 H1121.2 L1120.2 134.4 H1111.4Z" fill="#d5ad6c" stroke="#5a4a30" stroke-width="0.8"/><line x1="1110.6" y1="135" x2="1114.6" y2="135" stroke="#5b8fd0" stroke-width="0.8"/></g><g transform="translate(0,1.2)"><path d="M1111.8 151.8 L1117.2 146.4" stroke="#8a8a8a" stroke-width="2.3" stroke-linecap="round"/><path d="M1116 144.4 L1119.4 141.6 L1121.2 143.4 L1118.6 146.8Z" fill="#3b3f45" stroke="#3b3f45" stroke-width="1.1" stroke-linejoin="round"/><path d="M1120.3 148.3 V152.5 M1118.2 150.4 H1122.4" stroke="#2e9a3a" stroke-width="2"/></g><rect x="1111.4" y="158.6" width="11.4" height="10.4" fill="#f9f9f9" stroke="#6a6a6a" stroke-width="1.1"/><rect x="1111.8" y="159" width="10.6" height="1.8" fill="#8aa"/><rect x="1112.8" y="163.4" width="4" height="4" fill="none" stroke="#6a6a6a" stroke-width="0.9"/><path d="M1118.2 162.6 L1121.4 159.8" stroke="#4d7aa8" stroke-width="1"/><rect x="1110.8" y="173.7" width="13.4" height="1.2" fill="#a9a9a9"/><circle cx="1117" cy="187.2" r="4.6" fill="none" stroke="#4d7aa8" stroke-width="1.3"/><circle cx="1117" cy="187.2" r="1.1" fill="#333"/><path d="M1114.4 180.8 L1117.4 182.6 L1114.6 184.4Z" fill="#4d7aa8"/><ellipse cx="1116.6" cy="202.5" rx="4.2" ry="3.2" fill="none" stroke="#4d7aa8" stroke-width="1.3"/><line x1="1116.6" y1="197.4" x2="1116.6" y2="207.6" stroke="#4d7aa8" stroke-width="1.2"/><path d="M1121.8 202 L1119.4 204.8 L1119 201.4Z" fill="#4d7aa8"/><rect x="1110.8" y="212.4" width="13.4" height="1.2" fill="#a9a9a9"/><path d="M1116.2 219.6 L1111.4 229.6 H1116.2Z" fill="#8b8b8b"/><path d="M1118 219.6 L1122.6 229.6 H1118Z" fill="#c3d7ec" stroke="#4d7aa8" stroke-width="0.8"/><line x1="1117.1" y1="218.6" x2="1117.1" y2="231" stroke="#777" stroke-width="0.8" stroke-dasharray="1.4 0.8"/><path d="M1115.2 234.6 L1111.2 243.4 L1116 244.6Z" fill="#8b8b8b"/><path d="M1116.6 234.2 L1122.8 242 L1118.6 245.2Z" fill="#c3d7ec" stroke="#4d7aa8" stroke-width="0.8"/><path d="M1114 236 L1120 244" stroke="#666" stroke-width="0.8"/><rect x="1110.8" y="250.7" width="13.4" height="1.2" fill="#a9a9a9"/><rect x="1112.4" y="257.8" width="4" height="4" rx="0.6" fill="#fff" stroke="#4d7aa8" stroke-width="1.1"/><rect x="1112.4" y="263.6" width="4" height="4" rx="0.6" fill="#fff" stroke="#4d7aa8" stroke-width="1.1"/><rect x="1118.2" y="257.8" width="4" height="4" rx="0.6" fill="#fff" stroke="#4d7aa8" stroke-width="1.1"/><rect x="1118.2" y="263.6" width="4" height="4" rx="0.6" fill="#fff" stroke="#4d7aa8" stroke-width="1.1"/><path d="M1117 273.2 L1122.6 276.4 V282.4 L1117 285.6 L1111.4 282.4 V276.4Z" fill="#cfe0f2" stroke="#4d7aa8" stroke-width="1.2"/><path d="M1111.4 276.4 L1117 279.6 L1122.6 276.4 M1117 279.6 V285.6" fill="none" stroke="#4d7aa8" stroke-width="1"/><rect x="1110.8" y="288.6" width="13.4" height="1.2" fill="#a9a9a9"/><rect x="1113" y="296.4" width="3" height="7" fill="none" stroke="#6a6a6a" stroke-width="1"/><rect x="1117.4" y="298.6" width="4" height="4.8" rx="1.2" fill="none" stroke="#6a6a6a" stroke-width="1"/><line x1="1111.6" y1="306" x2="1122.8" y2="306" stroke="#4d7aa8" stroke-width="1.1"/><rect x="1110.8" y="310.7" width="13.4" height="1.2" fill="#a9a9a9"/><rect x="1111.6" y="320.6" width="10.8" height="6" fill="#cfe0f2" stroke="#4d7aa8" stroke-width="1"/><line x1="1119" y1="317.8" x2="1119" y2="329.6" stroke="#6a6a6a" stroke-width="1.3"/><path d="M1111.4 341.2 H1116.6 M1117.6 346 L1121.6 336" stroke="#6a6a6a" stroke-width="1.2"/><path d="M1112 341.2 H1115.4" stroke="#4d7aa8" stroke-width="1.2"/><path d="M1112 352.2 V360.6 H1122 V352.2" fill="none" stroke="#6a6a6a" stroke-width="1.2"/><path d="M1112 352.4 H1114.6 M1119.6 352.4 H1122" stroke="#6a6a6a" stroke-width="1.2"/><path d="M1115 352.4 V354.2 M1119.2 352.4 V354.2" stroke="#4d7aa8" stroke-width="1.4"/><path d="M1112 368 V376.4 H1122 V368" fill="none" stroke="#6a6a6a" stroke-width="1.2"/><path d="M1112 368.2 H1122" stroke="#6a6a6a" stroke-width="1.2"/><circle cx="1115.2" cy="367.8" r="1" fill="#4d7aa8"/><circle cx="1118.8" cy="367.8" r="1" fill="#4d7aa8"/><path d="M1111.4 389.2 H1120" stroke="#6a6a6a" stroke-width="1.2"/><circle cx="1121" cy="389.2" r="1.4" fill="#4d7aa8"/><path d="M1112 399 H1117.6 L1122.4 411.4 H1112Z" fill="#e6eef6" stroke="#6a6a6a" stroke-width="1.1" stroke-linejoin="round"/><path d="M1116 399.4 V411" stroke="#a9c0d8" stroke-width="1.4"/><rect x="1110.8" y="414.4" width="13.4" height="1.2" fill="#a9a9a9"/><path d="M1112 420.2 H1115.8 L1122.4 428.6 V433.2 H1112Z" fill="#e9eef3" stroke="#6a6a6a" stroke-width="1.1" stroke-linejoin="round"/><path d="M1116 420.6 L1122 428.6" stroke="#4d7aa8" stroke-width="1"/><path d="M1112 437 H1115 C1119.4 437 1122.4 440.4 1122.4 444.4 V449.8 H1112Z" fill="#e9eef3" stroke="#6a6a6a" stroke-width="1.1"/><path d="M1115.4 437.2 C1119.2 437.4 1122 440.4 1122.2 444" fill="none" stroke="#4d7aa8" stroke-width="1"/><rect x="1110.8" y="452.7" width="13.4" height="1.2" fill="#a9a9a9"/><path d="M1112.2 469.2 L1121.6 460.6" stroke="#6a6a6a" stroke-width="1.1"/><path d="M1113.2 470.8 L1122.8 462.2" stroke="#6a6a6a" stroke-width="1.1"/><path d="M1112 468 L1114.4 471 M1120.6 459.4 L1123 462.4" stroke="#444" stroke-width="1.2"/><path d="M1114.6 466.6 L1120.4 461.6" stroke="#cfe0f2" stroke-width="1.2"/><path d="M1112 486 L1122.4 476.4" stroke="#444" stroke-width="1.2"/><path d="M1114.2 484 L1113 482.6 M1117 481.4 L1115.8 480 M1119.8 478.8 L1118.6 477.4 M1122.4 476.4 L1121.2 475" stroke="#444" stroke-width="1.1"/><circle cx="1112.4" cy="485.6" r="1.1" fill="#444"/><rect x="1110.8" y="490.7" width="13.4" height="1.2" fill="#a9a9a9"/><rect x="1111.6" y="497" width="9.6" height="9.4" fill="#f1f1f1" stroke="#999" stroke-width="0.9"/><path d="M1112 501.6 L1116.4 497.2 M1112 505.6 L1120.6 497.2 M1115.6 506.2 L1121 500.8" stroke="#b5b5b5" stroke-width="0.9"/><path d="M1117 508.6 L1122.6 503 L1124 504.4 L1118.4 510Z" fill="#e8a050" stroke="#a86a28" stroke-width="0.6"/><path d="M1111.8 524.6 V517.4 C1111.8 515.4 1113.2 513.8 1115 513.8 H1117.2" fill="none" stroke="#4d7aa8" stroke-width="1.2"/><path d="M1111.8 524.6 H1116" stroke="#4d7aa8" stroke-width="1.2"/><path d="M1116.6 524.6 L1122.2 519 L1123.6 520.4 L1118 526Z" fill="#e8a050" stroke="#a86a28" stroke-width="0.6"/><rect x="1110.8" y="529.4" width="13.4" height="1.2" fill="#a9a9a9"/><path d="M1117 536.8 L1122 539.6 V545.4 L1117 548.2 L1112 545.4 V539.6Z" fill="#f4f4f4" stroke="#4d7aa8" stroke-width="1.1"/><path d="M1112 544 L1117 541.4 L1122 544" fill="#cfe0f2" stroke="#4d7aa8" stroke-width="1"/><defs><radialGradient id="sph" cx="0.38" cy="0.35" r="0.7"><stop offset="0" stop-color="#e0e0e0"/><stop offset="1" stop-color="#5c5c5c"/></radialGradient></defs><circle cx="1116.4" cy="559.2" r="4.9" fill="url(#sph)"/><circle cx="1121.2" cy="553.8" r="1.6" fill="#f5d420"/>
<rect x="0" y="633" width="1106" height="16" fill="#f0f0f0"/>
<rect x="0" y="633.4" width="15.6" height="14.8" fill="#ebebeb"/><path d="M15.3 633.6 V648 H0" fill="none" stroke="#b4b4b4" stroke-width="0.9"/>
<path d="M5.9 637.4 L9.7 640.5 L5.9 643.6Z" fill="#111"/><rect x="10.3" y="637.4" width="1.6" height="6.2" fill="#8a8a8a"/>
<path d="M15.9 633.4 L22.8 648.3 H54.2 L59.6 633.4Z" fill="#fff"/>
<path d="M59.6 633.4 L62.4 648.3 H103.6 L106.6 640.6 L104.6 633.4Z" fill="#ececec"/>
<path d="M104.6 633.4 L107 640.6 L110 648.3 H152.6 L158.7 633.4Z" fill="#ececec"/>
<path d="M59.6 633.4 H1106" stroke="#4e4e4e" stroke-width="1"/>
<path d="M15.9 633.4 L22.8 648.2 H54.2 L59.6 633.4" fill="none" stroke="#6a6a6a" stroke-width="1"/>
<path d="M58 639.6 L62.4 648.2 H103.6 L107 640.6 L104.4 633.4 M107 640.6 L110 648.2 H152.6 L158.7 633.4" fill="none" stroke="#5a5a5a" stroke-width="1"/>
<text x="25" y="643.6" font-family="Liberation Sans" font-size="9.2" font-weight="bold" fill="#222" textLength="28.10" lengthAdjust="spacingAndGlyphs" >Model</text>
<text x="65.9" y="643.5" font-family="Liberation Sans" font-size="9.2" font-weight="normal" fill="#2f3a3a" textLength="31.90" lengthAdjust="spacingAndGlyphs" >Layout1</text>
<text x="115.6" y="643.5" font-family="Liberation Sans" font-size="9.2" font-weight="normal" fill="#3a2f3a" textLength="31.90" lengthAdjust="spacingAndGlyphs" >Layout2</text>
<rect x="0" y="649" width="1106" height="53" fill="#f9f9f9"/>
<rect x="0" y="649" width="1106" height="3" fill="#fdfdfd"/>
<rect x="0" y="702" width="1106" height="1" fill="#c6c6c6"/>
<rect x="0" y="703" width="1106" height="17" fill="#fbfbfb"/>
<rect x="1090" y="655" width="14.6" height="44" fill="#efefef"/>
<path d="M1094 665 L1097 662 L1100 665" fill="none" stroke="#555" stroke-width="1.3"/><path d="M1094 689.5 L1097 692.5 L1100 689.5" fill="none" stroke="#555" stroke-width="1.3"/>
<text x="-15.8" y="666.3" font-family="Liberation Mono" font-size="12" font-weight="normal" fill="#50555a" textLength="39.90" lengthAdjust="spacingAndGlyphs" >Circle</text>
<text x="-36.3" y="681.2" font-family="Liberation Mono" font-size="12" font-weight="normal" fill="#50555a" textLength="372.40" lengthAdjust="spacingAndGlyphs" >2Point/3Point/TanTanRad/Arc/Multiple/&lt;Center of circle&gt;:</text>
<text x="-36.3" y="695.9" font-family="Liberation Mono" font-size="12" font-weight="normal" fill="#50555a" textLength="152.95" lengthAdjust="spacingAndGlyphs" >Diameter/&lt;Radius&gt; &lt;20&gt;:</text>
<text x="1033" y="504.4" font-family="Liberation Sans" font-size="13" fill="#4ccaa6" text-anchor="middle" textLength="9" lengthAdjust="spacingAndGlyphs">Y</text>
<rect x="1032.5" y="509" width="1.2" height="31.6" fill="#3e3e3e"/>
<rect x="1033.6" y="540" width="20" height="0.9" fill="#caa79a"/>
<rect x="1033.6" y="559.6" width="20" height="0.9" fill="#caa79a"/>
<rect x="1032.6" y="540" width="1.2" height="20.4" fill="#4ccaa6"/>
<rect x="1053.3" y="540" width="1.2" height="20.4" fill="#4ccaa6"/>
<text x="1045.2" y="555.2" font-family="Liberation Sans" font-size="12" fill="#3a3a3a" text-anchor="middle" textLength="11" lengthAdjust="spacingAndGlyphs">W</text>
<rect x="1054" y="559.5" width="30" height="1.2" fill="#3e3e3e"/>
<path d="M1089.4 556 L1097.6 565.2 M1097.6 556 L1089.4 565.2" stroke="#d29c94" stroke-width="1.1"/>
<path d="M1029.2 555.6 H1036.6 L1029.2 565 H1036.8" fill="none" stroke="#3eaac8" stroke-width="1.2"/></svg></body></html>
